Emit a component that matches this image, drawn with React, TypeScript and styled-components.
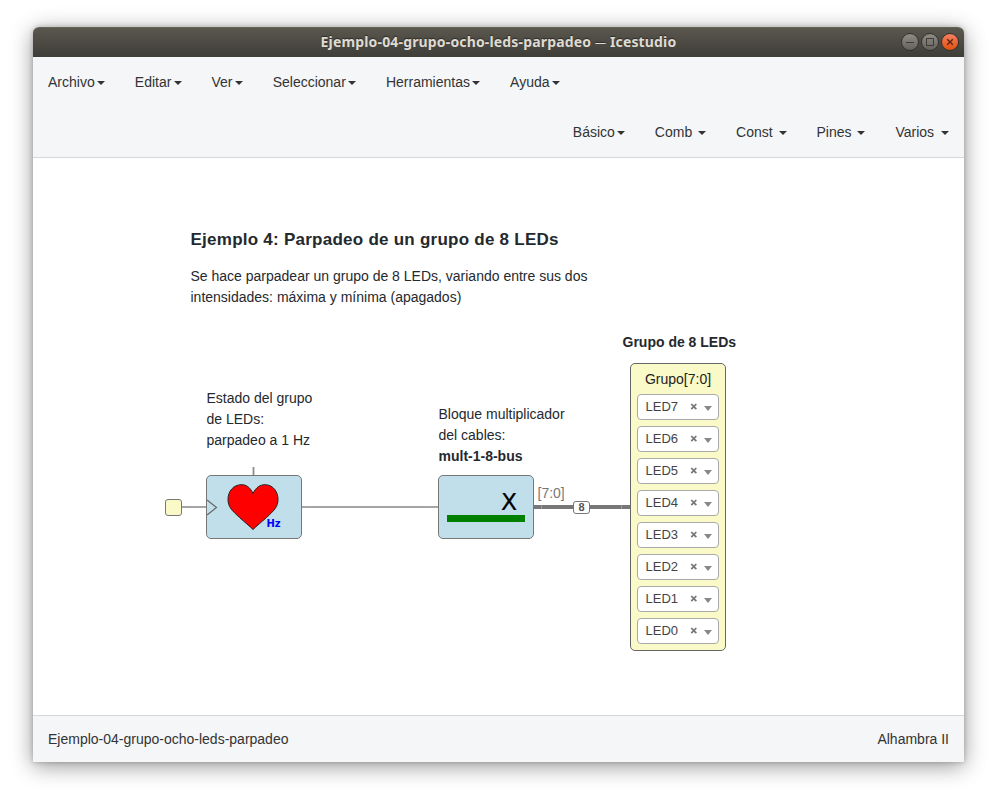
import React from 'react';
import styled, { createGlobalStyle, css } from 'styled-components';

const GlobalStyle = createGlobalStyle`
  * { box-sizing: border-box; }
  body {
    margin: 0;
    background: #fff;
    font: 14px/20px 'Liberation Sans', Arial, sans-serif;
    color: #333;
  }
`;

const Desktop = styled.div`
  height: 792px;
  padding: 27px 28px 30px 33px;
  overflow: hidden;
`;

const AppWindow = styled.div`
  height: 735px;
  display: flex;
  flex-direction: column;
  border-radius: 6px 6px 0 0;
  background: #fff;
  box-shadow: 0 4px 22px rgba(0, 0, 0, 0.42), 0 0 5px rgba(0, 0, 0, 0.22);
`;

const TitleBar = styled.header`
  flex: none;
  height: 30px;
  display: grid;
  grid-template-columns: 1fr auto 1fr;
  align-items: center;
  padding: 0 5px;
  border-radius: 6px 6px 0 0;
  border-top: 1px solid #65635a;
  background: linear-gradient(#5a574e, #3e3d38);
`;

const Title = styled.h1`
  grid-column: 2;
  margin: 0;
  padding-bottom: 2px;
  font: bold 14px/27px 'Noto Sans', sans-serif;
  letter-spacing: 0.16px;
  color: #dfdbd2;
  white-space: nowrap;
  text-shadow: 0 -1px 1px #2b2a27;
`;

const Dash = styled.span`
  font-weight: 400;
  font-size: 11px;
  vertical-align: 1px;
`;

const WindowButtons = styled.div`
  grid-column: 3;
  display: flex;
  justify-content: flex-end;
  gap: 2px;
  padding-bottom: 1px;
`;

const WindowButton = styled.button<{ $close?: boolean }>`
  width: 18px;
  height: 18px;
  padding: 0;
  display: grid;
  place-items: center;
  border: 1px solid #33322e;
  border-radius: 50%;
  background: ${p => (p.$close ? 'linear-gradient(#f38060, #e2500f)' : 'linear-gradient(#8e8c84, #63615b)')};
  color: ${p => (p.$close ? '#5a2410' : '#3c3b37')};
`;

const MenuArea = styled.nav`
  flex: none;
  height: 101px;
  background: #f4f6f8;
  border-bottom: 1px solid #d5d8da;
`;

const Caret = styled.span`
  display: inline-block;
  margin-left: 2.13px;
  vertical-align: middle;
  border: 4px solid transparent;
  border-top-color: #333;
  border-bottom: 0;
`;

const MenuItem = styled.a`
  padding: 15px;
  white-space: pre;
`;

const MenuRow = styled.div<{ $right?: boolean }>`
  display: flex;
  height: 50px;
  justify-content: ${p => (p.$right ? 'flex-end' : 'flex-start')};

  ${p => p.$right && css`
    ${Caret} { margin-left: 2px; }
    ${MenuItem}:last-child ${Caret} { margin-left: 3px; }
  `}
`;

const Canvas = styled.main`
  position: relative;
  flex: 1;
  overflow: hidden;
`;

const place = css<{ $x: number; $y: number }>`
  position: absolute;
  left: ${p => p.$x}px;
  top: ${p => p.$y}px;
`;

const Note = styled.div<{ $x: number; $y: number }>`
  ${place}
  line-height: 21px;
  color: #24292e;
  white-space: pre;
`;

const Heading = styled.h2`
  margin: 0 0 16px;
  font-size: 17px;
  line-height: 21px;
  letter-spacing: 0.25px;
`;

const Wires = styled.svg`
  position: absolute;
  left: 0;
  top: 0;
`;

const Block = styled.div<{ $x: number; $y: number }>`
  ${place}
  width: 96px;
  height: 64px;
  border: 1px solid #777;
  border-radius: 5px;
  background: #c0dfeb;

  svg { display: block; }
`;

const ClockPin = styled.div<{ $x: number; $y: number }>`
  ${place}
  width: 17px;
  height: 17px;
  border: 1px solid #777;
  border-radius: 3px;
  background: #fafac8;
`;

const BusLabel = styled.span<{ $x: number; $y: number }>`
  ${place}
  color: #777;
`;

const BusSize = styled.span<{ $x: number; $y: number }>`
  ${place}
  width: 17px;
  height: 13px;
  border: 1px solid #777;
  border-radius: 3px;
  background: #fff;
  color: #555;
  font-size: 11px;
  font-weight: bold;
  line-height: 11px;
  text-align: center;
`;

const OutputBlock = styled.section<{ $x: number; $y: number }>`
  ${place}
  width: 96px;
  height: 288px;
  padding: 5px 6px;
  display: flex;
  flex-direction: column;
  gap: 6px;
  border: 1px solid #666;
  border-radius: 5px;
  background: #fafac8;
`;

const OutputName = styled.div`
  height: 19px;
  text-align: center;
  color: #222;
`;

const PinSelect = styled.div`
  flex: none;
  height: 26px;
  width: 82px;
  display: flex;
  align-items: center;
  padding: 0 5px 1px 7.5px;
  border: 1px solid #aaa;
  border-radius: 4px;
  background: #fff;
  color: #444;
  font-size: 13px;
`;

const PinName = styled.span`
  flex: 1;
`;

const Footer = styled.footer`
  flex: none;
  height: 47px;
  display: flex;
  justify-content: space-between;
  align-items: center;
  padding: 0 15px;
  border-top: 1px solid #d5d9d9;
  background: #f4f6f8;
`;

const fileMenus = ['Archivo', 'Editar', 'Ver', 'Seleccionar', 'Herramientas', 'Ayuda'];
const blockMenus = ['Básico', 'Comb ', 'Const ', 'Pines ', 'Varios '];
const pins = ['LED7', 'LED6', 'LED5', 'LED4', 'LED3', 'LED2', 'LED1', 'LED0'];

function Menu({ items, right }: { items: string[]; right?: boolean }) {
  return (
    <MenuRow $right={right}>
      {items.map(label => (
        <MenuItem key={label}>{label}<Caret /></MenuItem>
      ))}
    </MenuRow>
  );
}

function PinRow({ name }: { name: string }) {
  return (
    <PinSelect>
      <PinName>{name}</PinName>
      <svg width="23" height="12" viewBox="0 0 23 12">
        <path d="M1.300 3l5 5.200M6.300 3l-5 5.200" stroke="#777" strokeWidth="1.800" fill="none" />
        <path d="M14 5h8l-4 5z" fill="#888" />
      </svg>
    </PinSelect>
  );
}

export default function App() {
  return (
    <Desktop>
      <GlobalStyle />
      <AppWindow>
        <TitleBar>
          <Title>Ejemplo-04-grupo-ocho-leds-parpadeo <Dash>—</Dash> Icestudio</Title>
          <WindowButtons>
            <WindowButton aria-label="Minimizar">
              <svg width="16" height="16" stroke="currentColor"><path d="M4 8.500h8" /></svg>
            </WindowButton>
            <WindowButton aria-label="Maximizar">
              <svg width="16" height="16" stroke="currentColor" fill="none"><path d="M4.500 4.500h7v7h-7z" /></svg>
            </WindowButton>
            <WindowButton $close aria-label="Cerrar">
              <svg width="16" height="16" stroke="currentColor" strokeWidth="1.400"><path d="M5.200 5.200l5.600 5.600M10.800 5.200l-5.600 5.600" /></svg>
            </WindowButton>
          </WindowButtons>
        </TitleBar>
        <MenuArea>
          <Menu items={fileMenus} />
          <Menu items={blockMenus} right />
        </MenuArea>
        <Canvas>
          <Note $x={157.5} $y={71}>
            <Heading>Ejemplo 4: Parpadeo de un grupo de 8 LEDs</Heading>
            {'Se hace parpadear un grupo de 8 LEDs, variando entre sus dos\nintensidades: máxima y mínima (apagados)'}
          </Note>
          <Note $x={173.5} $y={230}>{'Estado del grupo\nde LEDs:\nparpadeo a 1 Hz'}</Note>
          <Note $x={405.5} $y={246}>{'Bloque multiplicador\ndel cables:\n'}<b>mult-1-8-bus</b></Note>
          <Note $x={589.5} $y={174}><b>Grupo de 8 LEDs</b></Note>

          <Wires width="931" height="557" fill="none">
            <path d="M148 349h25M269 349h136M220.500 309v8" stroke="#888" strokeWidth="1.700" />
            <path d="M501 349h96" stroke="#777" strokeWidth="4" />
            <path d="M508.500 347v4M588.500 347v4" stroke="#999" />
            <path d="M164.500 348v2M276.500 348v2M397.500 348v2" stroke="#aaa" />
          </Wires>

          <ClockPin $x={132} $y={341} />
          <Block $x={173} $y={317}>
            <svg width="94" height="62" fill="none">
              <path d="M0 24l9.500 7.500L0 39" stroke="#666" strokeWidth="1.200" />
              <path
                d="M46 17.500C43 11 39 8.500 34 8.700C26 9 21 15.500 21 23.500C21 31 25 34.500 32.500 41.500C37.500 46 42.500 50 46 53.500C49.500 50 54.500 46 59.500 41.500C67 34.500 71 31 71 23.500C71 15.500 66 9 58.500 8.700C53.500 8.500 49 11 46 17.500Z"
                fill="#f00"
                stroke="#222"
              />
              <text x="59.500" y="51" fill="#00f" fontFamily="'DejaVu Sans', sans-serif" fontSize="10" fontWeight="700">Hz</text>
            </svg>
          </Block>
          <Block $x={405} $y={317}>
            <svg width="94" height="62">
              <text x="62" y="34" fill="#000" stroke="#000" strokeWidth="0.200" fontFamily="'DejaVu Sans', sans-serif" fontSize="23.500">X</text>
              <path d="M8 39h78v7h-78z" fill="#008000" />
            </svg>
          </Block>
          <BusLabel $x={504.5} $y={325}>[7:0]</BusLabel>
          <BusSize $x={540} $y={343}>8</BusSize>

          <OutputBlock $x={597} $y={205}>
            <OutputName>Grupo[7:0]</OutputName>
            {pins.map(name => <PinRow key={name} name={name} />)}
          </OutputBlock>
        </Canvas>
        <Footer>
          <span>Ejemplo-04-grupo-ocho-leds-parpadeo</span>
          <span>Alhambra II</span>
        </Footer>
      </AppWindow>
    </Desktop>
  );
}
